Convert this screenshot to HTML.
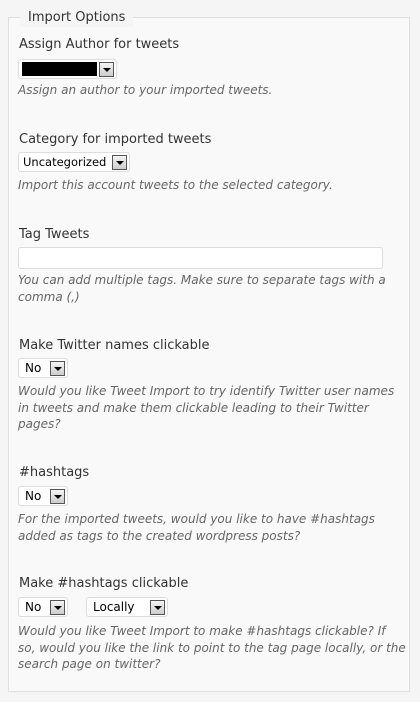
<!DOCTYPE html>
<html><head><style>
body{margin:0;width:420px;height:702px;background:#f5f5f5;position:relative;overflow:hidden;font-family:"DejaVu Sans","Liberation Sans",sans-serif;}
.fs{position:absolute;left:8px;top:17px;width:402px;height:675px;border:1px solid #dfdfdf;background:#f9f9f9;box-sizing:border-box}
.lg{position:absolute;left:20px;top:9px;padding:0 8px;background:#f5f5f5;font-size:13px;color:#333;line-height:18px}
.t{position:absolute;left:19px;font-size:13px;color:#333;line-height:16px;white-space:nowrap}
.d{position:absolute;left:18px;font-size:12px;font-style:italic;color:#666;line-height:16.5px;white-space:nowrap}
.s{position:absolute;height:20px;background:#fff;border:1px solid #ddd;border-radius:3px;box-sizing:border-box;font-size:12px;color:#000;line-height:18px;padding-left:6px}
.s b{position:absolute;right:2px;top:2px;width:15px;height:15px;box-sizing:border-box;border:1px solid #555;background:linear-gradient(#f4f4f4,#ccc)}
.s b:after{content:"";position:absolute;left:3px;top:5px;border-left:4px solid transparent;border-right:4px solid transparent;border-top:4px solid #000}
</style></head><body>
<div class="fs"></div>
<div class="lg">Import Options</div>

<div class="t" style="top:37px">Assign Author for tweets</div>
<div class="s" style="left:18px;top:59px;width:99px"><span style="position:absolute;left:3px;top:2px;width:75px;height:14px;background:#000"></span><b></b></div>
<div class="d" style="top:82px">Assign an author to your imported tweets.</div>

<div class="t" style="top:132px">Category for imported tweets</div>
<div class="s" style="left:18px;top:152px;width:112px;padding-left:4px;font-size:11.5px">Uncategorized<b></b></div>
<div class="d" style="top:177px">Import this account tweets to the selected category.</div>

<div class="t" style="top:227px">Tag Tweets</div>
<div class="s" style="left:18px;top:247px;width:365px;height:22px"></div>
<div class="d" style="top:272px">You can add multiple tags. Make sure to separate tags with a<br>comma (,)</div>

<div class="t" style="top:338px">Make Twitter names clickable</div>
<div class="s" style="left:18px;top:358px;width:50px">No<b></b></div>
<div class="d" style="top:383px">Would you like Tweet Import to try identify Twitter user names<br>in tweets and make them clickable leading to their Twitter<br>pages?</div>

<div class="t" style="top:465px">#hashtags</div>
<div class="s" style="left:18px;top:486px;width:50px">No<b></b></div>
<div class="d" style="top:511px">For the imported tweets, would you like to have #hashtags<br>added as tags to the created wordpress posts?</div>

<div class="t" style="top:576px">Make #hashtags clickable</div>
<div class="s" style="left:18px;top:597px;width:50px">No<b></b></div>
<div class="s" style="left:86px;top:597px;width:82px">Locally<b></b></div>
<div class="d" style="top:623px">Would you like Tweet Import to make #hashtags clickable? If<br>so, would you like the link to point to the tag page locally, or the<br>search page on twitter?</div>
</body></html>
